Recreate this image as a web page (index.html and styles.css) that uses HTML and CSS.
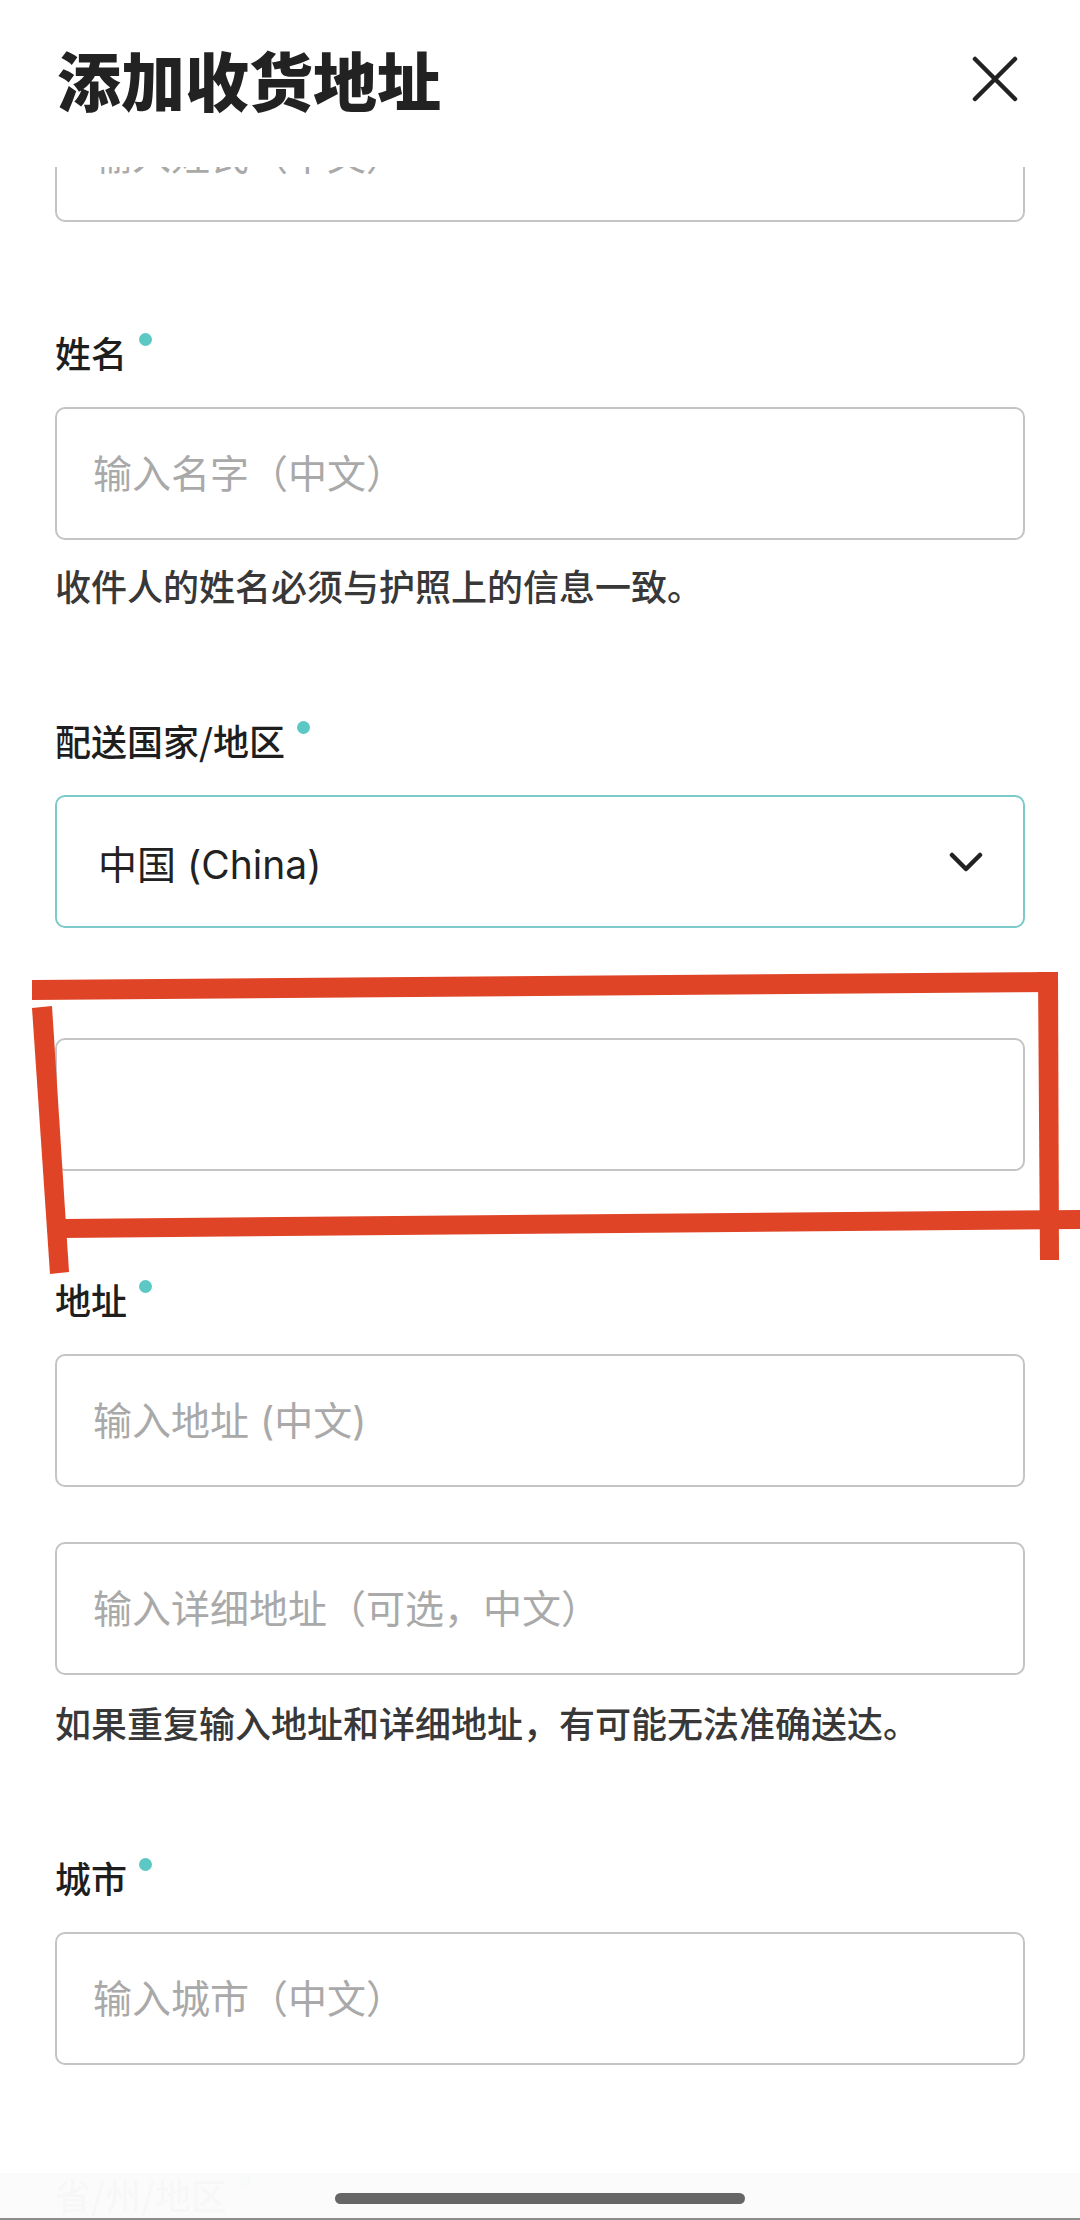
FILE: index.html
```html
<!DOCTYPE html>
<html lang="zh-CN">
<head>
    <meta charset="UTF-8">
    <meta name="viewport" content="width=device-width, initial-scale=1.0">
    <title>添加收货地址</title>
    <link rel="stylesheet" href="styles.css">
</head>
<body>
    <div class="page">
        <header class="header">
            <h1 class="title">添加收货地址</h1>
            <button class="close" aria-label="关闭">
                <svg width="46" height="46" viewBox="0 0 46 46">
                    <path d="M3 3 L43 43 M43 3 L3 43" stroke="#222" stroke-width="4.5" stroke-linecap="round" fill="none"/>
                </svg>
            </button>
        </header>

        <form class="form">
            <input class="field-input" type="text" placeholder="输入姓氏（中文）">

            <div class="field">
                <label class="label">姓名<span class="dot"></span></label>
                <input class="field-input" type="text" placeholder="输入名字（中文）">
                <p class="hint">收件人的姓名必须与护照上的信息一致。</p>
            </div>

            <div class="field">
                <label class="label">配送国家/地区<span class="dot"></span></label>
                <div class="select">
                    <span>中国 (China)</span>
                    <svg width="34" height="22" viewBox="0 0 34 22">
                        <path d="M3 3 L17 17 L31 3" stroke="#222" stroke-width="4.5" stroke-linecap="round" stroke-linejoin="round" fill="none"/>
                    </svg>
                </div>
            </div>

            <input class="field-input gap-input" type="text">

            <div class="field field-tight">
                <label class="label">地址<span class="dot"></span></label>
                <input class="field-input" type="text" placeholder="输入地址 (中文)">
                <input class="field-input second" type="text" placeholder="输入详细地址（可选，中文）">
                <p class="hint hint-low">如果重复输入地址和详细地址，有可能无法准确送达。</p>
            </div>

            <div class="field">
                <label class="label">城市<span class="dot"></span></label>
                <input class="field-input" type="text" placeholder="输入城市（中文）">
            </div>

            <div class="field field-last">
                <label class="label">省/州/地区<span class="dot"></span></label>
            </div>
        </form>

        <svg class="mark" width="1080" height="2220" viewBox="0 0 1080 2220">
            <g fill="#e04427">
                <polygon points="32,980 1058,972 1058,992 32,1000"/>
                <polygon points="1038,972 1058,972 1059,1260 1040,1260"/>
                <polygon points="32,1008 52,1006 69,1272 50,1274"/>
                <polygon points="62,1219 1080,1210 1080,1229 62,1238"/>
            </g>
        </svg>

        <div class="home-area">
            <div class="home-bar"></div>
        </div>
    </div>
</body>
</html>
```

FILE: styles.css
```css
* {
    box-sizing: border-box;
}
body {
    margin: 0;
    background-color: #ffffff;
    font-family: Inter, "Noto Sans CJK SC", sans-serif;
    color: #222;
}
.page {
    position: relative;
    width: 1080px;
    height: 2220px;
    overflow: hidden;
}
.header {
    position: absolute;
    top: 0;
    left: 0;
    right: 0;
    height: 167px;
    background-color: #ffffff;
    display: flex;
    justify-content: space-between;
    align-items: flex-start;
    padding: 0 62px 0 57px;
    z-index: 2;
}
.title {
    margin: 38px 0 0;
    font-family: "Noto Sans CJK SC", sans-serif;
    font-size: 64px;
    font-weight: 900;
    line-height: 80px;
    color: #222;
}
.close {
    margin-top: 56px;
    padding: 0;
    border: none;
    background: none;
    width: 46px;
    height: 46px;
}
.form {
    padding: 89px 55px 0;
}
.field {
    margin-top: 105px;
}
.field-tight {
    margin-top: 103px;
}
.field-last {
    margin-top: 104px;
}
.label {
    display: flex;
    align-items: flex-start;
    font-family: "Noto Sans CJK SC", sans-serif;
    font-size: 36px;
    font-weight: 500;
    line-height: 50px;
    color: #1e1e1e;
}
.dot {
    width: 13px;
    height: 13px;
    border-radius: 50%;
    background-color: #5cc8c4;
    margin: 6px 0 0 12px;
}
.field-input {
    display: block;
    width: 100%;
    height: 133px;
    margin-top: 30px;
    padding: 0 36px;
    border: 2.5px solid #c4c4c4;
    border-radius: 10px;
    font-family: Inter, "Noto Sans CJK SC", sans-serif;
    font-size: 39px;
    color: #222;
    background: #fff;
    outline: none;
}
.form > .field-input:first-child {
    margin-top: 0;
}
.field-input::placeholder {
    color: #a9a9a9;
}
.field-input.second {
    margin-top: 55px;
}
.gap-input {
    margin-top: 110px;
}
.hint {
    margin: 20px 0 0;
    font-family: "Noto Sans CJK SC", sans-serif;
    font-size: 36px;
    font-weight: 500;
    line-height: 50px;
    color: #383838;
}
.hint-low {
    margin-top: 22px;
}
.select {
    display: flex;
    justify-content: space-between;
    align-items: center;
    height: 133px;
    margin-top: 30px;
    padding: 0 40px 0 41px;
    border: 2.5px solid #7ccaca;
    border-radius: 10px;
    font-size: 39px;
    color: #222;
}
.select svg {
    margin-top: 2px;
}
.mark {
    position: absolute;
    top: 0;
    left: 0;
    z-index: 3;
}
.home-area {
    position: absolute;
    left: 0;
    right: 0;
    bottom: 0;
    height: 47px;
    background-color: rgba(251, 251, 251, 0.985);
    border-bottom: 2px solid #8c8c8c;
    z-index: 2;
}
.home-bar {
    position: absolute;
    left: 335px;
    top: 20px;
    width: 410px;
    height: 11px;
    border-radius: 6px;
    background-color: #666;
}
```
